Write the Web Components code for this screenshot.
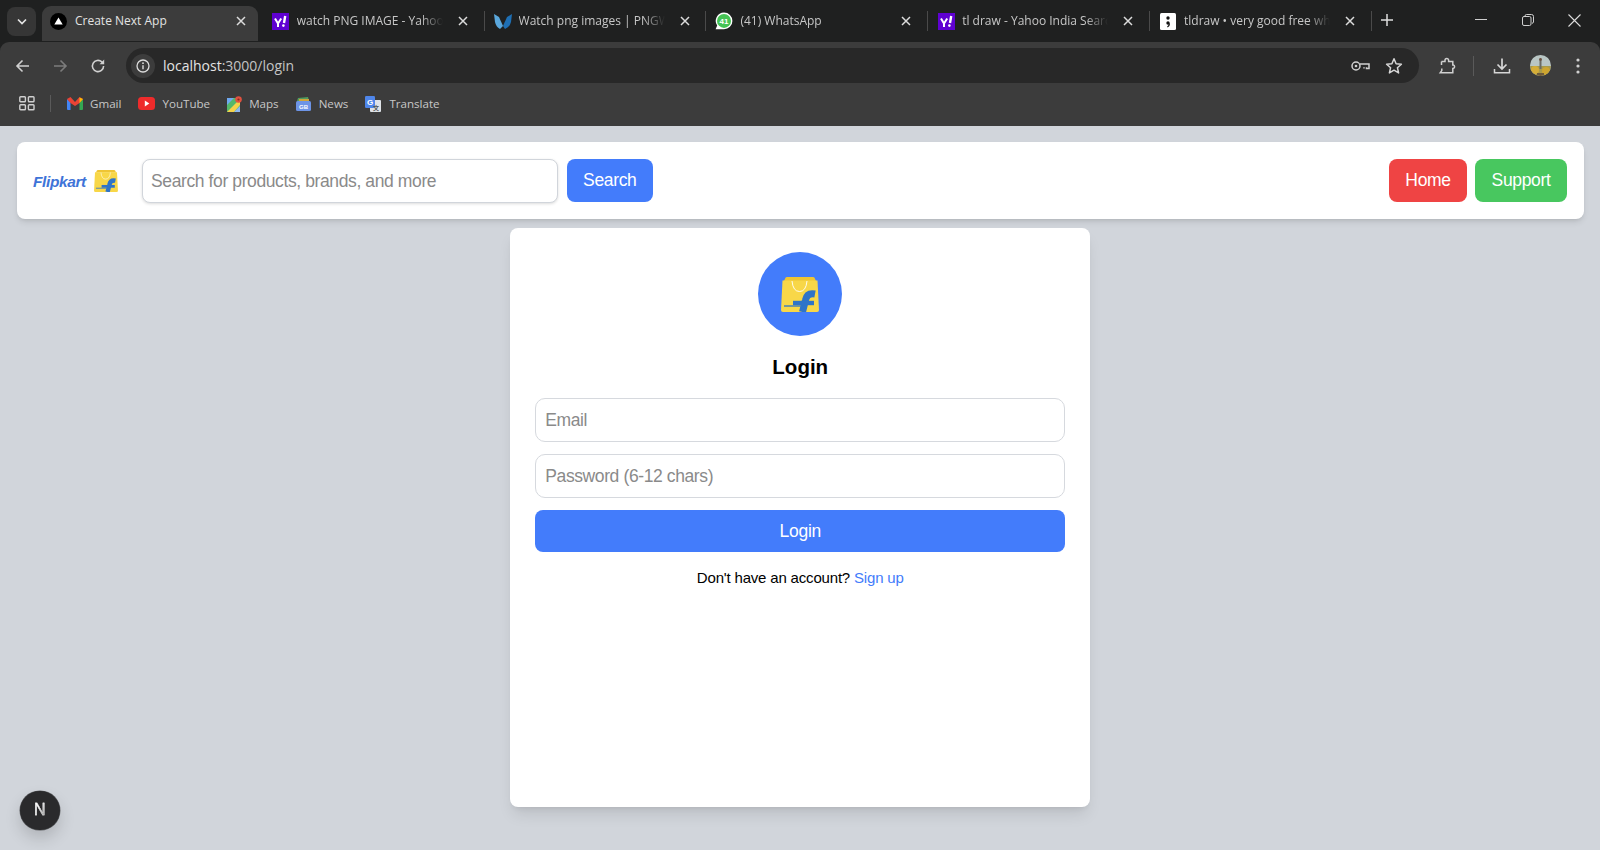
<!DOCTYPE html>
<html lang="en"><head><meta charset="utf-8"><title>Create Next App</title>
<style>
html,body{margin:0;height:100%;overflow:hidden;background:#d1d5db;font-family:"Liberation Sans",Arial,sans-serif}
body{display:flex;flex-direction:column}
</style></head>
<body>
<browser-chrome>
  <chrome-tab active title-text="Create Next App" icon="next"></chrome-tab>
  <chrome-tab title-text="watch PNG IMAGE - Yahoo" icon="yahoo"></chrome-tab>
  <chrome-tab title-text="Watch png images | PNGW" icon="wing"></chrome-tab>
  <chrome-tab title-text="(41) WhatsApp" icon="whatsapp"></chrome-tab>
  <chrome-tab title-text="tl draw - Yahoo India Searc" icon="yahoo"></chrome-tab>
  <chrome-tab title-text="tldraw • very good free wh" icon="tldraw"></chrome-tab>
</browser-chrome>
<app-page>
  <app-navbar></app-navbar>
  <login-card></login-card>
</app-page>
<dev-badge></dev-badge>
<script>
const BAG = (w,h)=>`<svg width="${w}" height="${h}" viewBox="0 0 38 35" aria-hidden="true">
<path d="M3 4 L4.5 .8 Q5 0 6 0 H32 Q33 0 33.5 .8 L35 4 Z" fill="#efc535"/>
<path d="M1.5 3.5 H36.5 L38 33 Q38 35 36 35 H2 Q0 35 0 33 Z" fill="#f8d748"/>
<path d="M11 4 Q12 14.5 18.5 14.5 Q25 14.5 26 4" fill="none" stroke="#fff" stroke-opacity=".9" stroke-width="1"/>
<path d="M34 17 Q26 15.5 24.5 23 L21.5 35" fill="none" stroke="#2f74c8" stroke-width="7"/>
<path d="M12 26 H33" stroke="#2f74c8" stroke-width="4.4"/>
<path d="M3 29 H20" stroke="#3b7cc0" stroke-width="1.4"/>
</svg>`;
const ICONS={
 next:`<svg width="17" height="17" viewBox="0 0 17 17"><circle cx="8.5" cy="8.5" r="8.5" fill="#000"/><path d="M8.5 4.5 12.7 11.5H4.3Z" fill="#fff"/></svg>`,
 yahoo:`<svg width="17" height="17" viewBox="0 0 17 17"><rect width="17" height="17" fill="#5f01d1"/><path d="M3 5.5 6 10.5V14M9.2 5.5 6 10.5" fill="none" stroke="#fff" stroke-width="2"/><path d="M13.2 3 12 10" stroke="#fff" stroke-width="2.4"/><circle cx="11.4" cy="12.6" r="1.3" fill="#fff"/></svg>`,
 wing:`<svg width="18" height="17" viewBox="0 0 18 17"><path d="M0 1 5 4 9 13 6 16Q2 14 1 9Z" fill="#5aa7dc"/><path d="M18 1 13 4 9 13 11 16Q16 14 17 9Z" fill="#1e6fb4"/></svg>`,
 whatsapp:`<svg width="18" height="18" viewBox="0 0 18 18"><path d="M9 .5A8.4 8.4 0 0 1 9 17.3H.6L2.2 13.6A8.4 8.4 0 0 1 9 .5Z" fill="#fff"/><circle cx="9" cy="8.9" r="7" fill="#45c354"/><text x="9" y="11.6" text-anchor="middle" font-family="Liberation Sans" font-size="8" font-weight="700" fill="#fff">41</text></svg>`,
 tldraw:`<svg width="16" height="17" viewBox="0 0 16 17"><rect width="16" height="17" rx="1.5" fill="#fff"/><circle cx="8" cy="5" r="1.7" fill="#111"/><circle cx="8" cy="10" r="1.7" fill="#111"/><path d="M9.4 10.5Q9.4 13 7.4 14" fill="none" stroke="#111" stroke-width="1.3"/></svg>`
};
function define(name,css,html,init){
  customElements.define(name,class extends HTMLElement{
    constructor(){super();this.attachShadow({mode:"open"});}
    connectedCallback(){
      this.shadowRoot.innerHTML=`<style>${css}</style>`+(typeof html==="function"?html(this):html);
      if(init)init(this);
    }
  });
}
define("chrome-tab",`
:host{display:block;width:221.8px;height:35px;flex:none;position:relative;color:#c7c7c7;font:12px/20px "Open Sans","Noto Sans",sans-serif}
.in{display:flex;align-items:center;height:35px;padding:0 0 5px 7px;box-sizing:border-box;width:221.8px}
.ic{width:20px;display:flex;justify-content:center;flex:none}
.t{width:146px;margin-left:6px;white-space:nowrap;flex:none;-webkit-mask-image:linear-gradient(90deg,#000 85%,transparent 100%);mask-image:linear-gradient(90deg,#000 85%,transparent 100%)}
.x{margin-left:15px;flex:none;display:flex}
.sep{position:absolute;right:1px;top:5px;width:1px;height:20px;background:#4a4a4a}
:host([active]){color:#e3e3e3}
:host([active]) .in{background:#3c3c3c;border-radius:9px 9px 0 0;width:216px;padding-left:6px}
:host([active]) .t{-webkit-mask-image:none;mask-image:none;margin-left:7px;width:145px}
:host([active]) .x{margin-left:16px}
:host([active]) .sep{display:none}
`,h=>`<div class="in"><span class="ic">${ICONS[h.getAttribute("icon")]}</span><span class="t">${h.getAttribute("title-text")}</span><span class="x"><svg width="10" height="10" viewBox="0 0 10 10"><path d="M1 1 9 9M9 1 1 9" stroke="#dcdcdc" stroke-width="1.5"/></svg></span></div><div class="sep"></div>`);

define("browser-chrome",`
:host{display:block;flex:none;background:#1f2020;font-family:"Open Sans","Noto Sans",sans-serif}
.strip{height:42px;display:flex;align-items:flex-start;box-sizing:border-box;padding-top:6px;position:relative}
.drop{width:29px;height:29px;margin:1px 6px 0 7px;background:#363636;border-radius:8px;display:flex;align-items:center;justify-content:center;flex:none}
.tabs{display:flex;flex:none}
.plus{margin:7px 0 0 7px;display:flex;flex:none}
.win{margin-left:auto;display:flex;flex:none;padding-right:2px;margin-top:4px}
.win span{width:47px;display:flex;justify-content:center;height:20px;align-items:center}
.bar{background:#3c3c3c;border-radius:9px 9px 0 0;height:84px;display:flex;flex-direction:column;box-sizing:border-box;padding-top:6px}
.tool{height:35px;display:flex;align-items:center;padding-left:14px;flex:none}
.nav{width:37px;display:flex;justify-content:flex-start;flex:none}
.omni{width:1293px;height:35px;border-radius:18px;background:#282828;display:flex;align-items:center;flex:none;box-sizing:border-box;padding-left:5px}
.info{width:24px;height:24px;border-radius:50%;background:#3c3c3c;display:flex;align-items:center;justify-content:center;flex:none}
.url{margin-left:8px;color:#e4e4e4;font-size:14px;white-space:nowrap}
.url b{font-weight:400;color:#c4c4c4}
.oright{margin-left:auto;display:flex;align-items:center;gap:15px;padding-right:16px}
.tr{display:flex;align-items:center;flex:none}
.bm{height:43px;display:flex;align-items:center;padding:0 0 2px 19px;box-sizing:border-box;color:#c7c7c7;font-size:11.6px}
.bm .vs{width:1px;height:17px;background:#5a5a5a;margin:0 16px 0 15px}
.bk{display:flex;align-items:center;gap:7px;margin-right:17px;white-space:nowrap}
.bk svg{flex:none}
`,`
<div class="strip">
 <div class="drop"><svg width="12" height="8" viewBox="0 0 12 8"><path d="M2 1.5 6 5.5 10 1.5" fill="none" stroke="#e3e3e3" stroke-width="1.7"/></svg></div>
 <div class="tabs"><slot></slot></div>
 <div class="plus"><svg width="14" height="14" viewBox="0 0 14 14"><path d="M7 1V13M1 7H13" stroke="#dedede" stroke-width="1.5"/></svg></div>
 <div class="win">
  <span><svg width="12" height="12" viewBox="0 0 12 12"><path d="M0 5.5H12" stroke="#cfcfcf"/></svg></span>
  <span><svg width="12" height="12" viewBox="0 0 12 12"><rect x=".5" y="2.5" width="8.5" height="9" rx="1.5" fill="none" stroke="#cfcfcf"/><path d="M3 2.5V2Q3 .5 4.5 .5H9.5Q11.5 .5 11.5 2.5V8Q11.5 9 10 9.3" fill="none" stroke="#cfcfcf"/></svg></span>
  <span><svg width="13" height="13" viewBox="0 0 13 13"><path d="M.5.5 12.5 12.5M12.5.5.5 12.5" stroke="#dcdcdc" stroke-width="1.1"/></svg></span>
 </div>
</div>
<div class="bar">
 <div class="tool">
  <span class="nav"><svg width="18" height="18" viewBox="0 0 18 18"><path d="M15 9H3M8.5 3.5 3 9 8.5 14.5" fill="none" stroke="#d0d0d0" stroke-width="1.6"/></svg></span>
  <span class="nav"><svg width="18" height="18" viewBox="0 0 18 18"><path d="M3 9H15M9.5 3.5 15 9 9.5 14.5" fill="none" stroke="#7c7c7c" stroke-width="1.6"/></svg></span>
  <span class="nav" style="margin-left:1px"><svg width="18" height="18" viewBox="0 0 18 18"><path d="M14.6 9A5.6 5.6 0 1 1 12.8 4.9L14.6 6.6" fill="none" stroke="#d0d0d0" stroke-width="1.6"/><path d="M15.2 2.6V7.2H10.6Z" fill="#d0d0d0"/></svg></span>
  <div class="omni">
   <div class="info"><svg width="14" height="14" viewBox="0 0 14 14"><circle cx="7" cy="7" r="6" fill="none" stroke="#dcdcdc" stroke-width="1.3"/><path d="M7 6.2V10.3" stroke="#dcdcdc" stroke-width="1.4"/><circle cx="7" cy="4.2" r=".9" fill="#dcdcdc"/></svg></div>
   <span class="url">localhost<b>:3000/login</b></span>
   <div class="oright">
    <svg width="19" height="12" viewBox="0 0 19 12"><circle cx="5" cy="6" r="4" fill="none" stroke="#d0d0d0" stroke-width="1.5"/><circle cx="5" cy="6" r="1.3" fill="#d0d0d0"/><path d="M9 4H18V8.5H15.5V7.2M13 8.5V7.2" fill="none" stroke="#d0d0d0" stroke-width="1.5"/></svg>
    <svg width="18" height="18" viewBox="0 0 18 18"><path d="M9 1.8 11.1 6.7 16.4 7.2 12.4 10.7 13.6 15.9 9 13.2 4.4 15.9 5.6 10.7 1.6 7.2 6.9 6.7Z" fill="none" stroke="#d6d6d6" stroke-width="1.5" stroke-linejoin="round"/></svg>
   </div>
  </div>
  <div class="tr" style="margin-left:19px"><svg width="18" height="18" viewBox="0 0 18 18"><path d="M3.5 4.5H7V3.2A1.8 1.8 0 0 1 10.6 3.2V4.5H14.8V8H15.4A1.8 1.8 0 0 1 15.4 11.4H14.8V15.8H2.2L3.8 13.6V11.6" fill="none" stroke="#d0d0d0" stroke-width="1.5"/><path d="M3.5 4.5V8" stroke="#d0d0d0" stroke-width="1.5"/></svg></div>
  <div class="tr" style="margin-left:17px;width:1px;height:20px;background:#5a5a5a"></div>
  <div class="tr" style="margin-left:19px"><svg width="18" height="18" viewBox="0 0 18 18"><path d="M9 1.5V11.5M4.5 7.5 9 12 13.5 7.5" fill="none" stroke="#d6d6d6" stroke-width="1.7"/><path d="M1.5 12V15.8H16.5V12" fill="none" stroke="#d6d6d6" stroke-width="1.5"/></svg></div>
  <div class="tr" style="margin-left:19px"><svg width="21" height="21" viewBox="0 0 21 21"><defs><clipPath id="av"><circle cx="10.5" cy="10.5" r="10.5"/></clipPath></defs><g clip-path="url(#av)"><rect width="21" height="21" fill="#b9c6c4"/><rect y="11" width="21" height="10" fill="#a89a4a"/><circle cx="5" cy="15" r="4" fill="#d5ad38"/><circle cx="16" cy="16" r="4" fill="#cda52f"/><rect x="9.5" y="5" width="2" height="9" fill="#6b6a62"/><circle cx="10.5" cy="4.5" r="1.4" fill="#6a5040"/><rect x="7" y="18" width="7" height="3" fill="#6e5a3a"/></g></svg></div>
  <div class="tr" style="margin-left:25px"><svg width="4" height="16" viewBox="0 0 4 16"><circle cx="2" cy="2" r="1.6" fill="#d0d0d0"/><circle cx="2" cy="8" r="1.6" fill="#d0d0d0"/><circle cx="2" cy="14" r="1.6" fill="#d0d0d0"/></svg></div>
 </div>
 <div class="bm">
  <svg width="16" height="15" viewBox="0 0 16 15"><g fill="none" stroke="#cfcfcf" stroke-width="1.4"><rect x=".8" y=".8" width="5.6" height="5" rx=".8"/><rect x="9.4" y=".8" width="5.6" height="5" rx=".8"/><rect x=".8" y="8.8" width="5.6" height="5" rx=".8"/><rect x="9.4" y="8.8" width="5.6" height="5" rx=".8"/></g></svg>
  <span class="vs"></span>
  <span class="bk"><svg width="16" height="13" viewBox="0 0 16 13"><path d="M0 2V12Q0 13 1 13H3.5V5Z" fill="#4285f4"/><path d="M16 2V12Q16 13 15 13H12.5V5Z" fill="#34a853"/><path d="M0 2 3.5 0 8 5 12.5 0 16 2 12.5 6 8 9 3.5 6Z" fill="#ea4335"/><path d="M12.5 0.5 16 2 12.5 6Z" fill="#fbbc04"/></svg>Gmail</span>
  <span class="bk"><svg width="17" height="13" viewBox="0 0 17 13"><rect width="17" height="13" rx="3.5" fill="#ee2b2b"/><path d="M6.8 3.6 11.3 6.5 6.8 9.4Z" fill="#fff"/></svg>YouTube</span>
  <span class="bk"><svg width="15" height="16" viewBox="0 0 15 16"><rect y="2" width="13" height="14" fill="#55b86a"/><path d="M0 16 13 3V9L7 16Z" fill="#f5d24a"/><path d="M0 2H7L0 9Z" fill="#6fa8f0"/><path d="M7 16 13 10V16Z" fill="#8fb8f0"/><circle cx="11.5" cy="3.5" r="3.3" fill="#e0513f"/><circle cx="11.5" cy="3.5" r="1.1" fill="#8c2a20"/></svg>Maps</span>
  <span class="bk" style="gap:8px"><svg width="15" height="14" viewBox="0 0 15 14"><path d="M2 1 12 0 13 4H1Z" fill="#4f9a5e"/><path d="M3 2H13V4H3Z" fill="#d0a43a"/><rect y="4" width="15" height="10" rx="1.5" fill="#6d94e6"/><text x="7.5" y="12" text-anchor="middle" font-family="Liberation Sans" font-size="6" font-weight="700" fill="#fff">GB</text></svg>News</span>
  <span class="bk" style="gap:8px"><svg width="16" height="16" viewBox="0 0 16 16"><rect x="5" y="4" width="11" height="12" rx="1" fill="#dfe3e8"/><rect width="10" height="12" rx="1.2" fill="#4f86ea"/><text x="5" y="9" text-anchor="middle" font-family="Liberation Sans" font-size="8" font-weight="700" fill="#fff">G</text><text x="11" y="13.5" text-anchor="middle" font-family="Noto Sans CJK SC" font-size="6" font-weight="700" fill="#555">文</text></svg>Translate</span>
 </div>
</div>`);

define("app-page",`
:host{display:flex;flex-direction:column;align-items:center;flex:1;min-height:0;box-sizing:border-box;padding:16px 16px 0 16.5px}
`,`<slot></slot>`);

define("app-navbar",`
:host{display:flex;align-items:center;align-self:stretch;flex:none;height:77px;box-sizing:border-box;background:#fff;border-radius:8px;padding:0 17px 0 16.5px;box-shadow:0 4px 6px -1px rgba(0,0,0,.1),0 2px 4px -2px rgba(0,0,0,.1)}
.logo{display:flex;align-items:center;width:109px;flex:none;gap:8px;padding-top:1px;box-sizing:border-box}
.logo i{font:italic 700 15.5px "Liberation Sans",sans-serif;color:#3f74d8;letter-spacing:-.4px;padding-top:1px}
input{width:416px;height:44px;box-sizing:border-box;border:1px solid #d1d5db;border-radius:8px;padding:1px 8px 0;font:17.5px "Liberation Sans",sans-serif;letter-spacing:-.39px;margin-right:9px;box-shadow:0 1px 3px rgba(0,0,0,.14);outline:0;color:#111}
input::placeholder{color:#8a8a8a;opacity:1}
button{height:43px;border:0;border-radius:8px;color:#fff;font:17.5px "Liberation Sans",sans-serif;letter-spacing:-.35px;flex:none;padding:0}
.s{background:#437cfb;width:85.5px}
.sp{flex:1}
.h{background:#ef4444;width:78px;margin-right:8px}
.g{background:#48c75f;width:92px}
`,`<div class="logo"><i>Flipkart</i>${BAG(24,22)}</div><input placeholder="Search for products, brands, and more" aria-label="Search"><button class="s">Search</button><span class="sp"></span><button class="h">Home</button><button class="g">Support</button>`);

define("login-card",`
:host{display:flex;flex-direction:column;align-items:center;flex:none;width:580px;height:579px;margin-top:9px;box-sizing:border-box;background:#fff;border-radius:8px;padding:24px 25px 25px;box-shadow:0 10px 15px -3px rgba(0,0,0,.1),0 4px 6px -4px rgba(0,0,0,.1)}
.c{width:84px;height:84px;border-radius:50%;background:#437cfb;display:flex;align-items:center;justify-content:center;flex:none}
h1{margin:18px 0 19px;font:700 20.5px/25px "Liberation Sans",sans-serif;color:#000}
input{width:100%;height:44px;box-sizing:border-box;border:1px solid #d6d9de;border-radius:10px;padding:1px 9px 0;font:17.5px "Liberation Sans",sans-serif;letter-spacing:-.39px;margin-bottom:12px;outline:0;flex:none}
input::placeholder{color:#8a8a8a;opacity:1}
button{width:100%;height:42px;border:0;border-radius:8px;background:#437cfb;color:#fff;font:17.5px "Liberation Sans",sans-serif;letter-spacing:-.3px;flex:none;padding:0}
p{margin:17px 0 0;font:15px/18px "Liberation Sans",sans-serif;letter-spacing:-.18px;color:#000}
a{color:#437cfb;text-decoration:none}
`,`<div class="c">${BAG(38,35)}</div><h1>Login</h1><input placeholder="Email" aria-label="Email"><input placeholder="Password (6-12 chars)" aria-label="Password"><button>Login</button><p>Don't have an account? <a href="#">Sign up</a></p>`);

define("dev-badge",`
:host{position:fixed;left:20px;bottom:20px;width:39.5px;height:39.5px;border-radius:50%;background:#2a2a2c;box-shadow:0 0 0 .5px rgba(0,0,0,.5),0 8px 16px rgba(0,0,0,.16);display:flex;align-items:center;justify-content:center;font:400 16px "Liberation Sans",sans-serif}
span{background:linear-gradient(120deg,#fff 35%,#8a8a8a 90%);-webkit-background-clip:text;background-clip:text;color:transparent;-webkit-text-stroke:.3px #eee}
`,`<span>N</span>`);
</script>
</body></html>
